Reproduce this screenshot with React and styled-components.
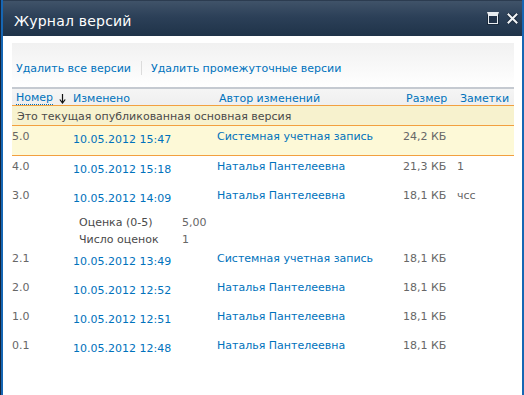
import React from "react";
import styled, { createGlobalStyle } from "styled-components";

const GlobalStyle = createGlobalStyle`
  html, body {
    margin: 0;
    padding: 0;
    background: #ffffff;
  }
  body {
    font-family: "DejaVu Sans", Verdana, sans-serif;
    font-size: 11px;
  }
`;

const versions = [
  { num: "5.0", date: "10.05.2012 15:47", author: "Системная учетная запись", size: "24,2 КБ", note: "", current: true },
  { num: "4.0", date: "10.05.2012 15:18", author: "Наталья Пантелеевна", size: "21,3 КБ", note: "1" },
  {
    num: "3.0", date: "10.05.2012 14:09", author: "Наталья Пантелеевна", size: "18,1 КБ", note: "чсс",
    props: [["Оценка (0-5)", "5,00"], ["Число оценок", "1"]],
  },
  { num: "2.1", date: "10.05.2012 13:49", author: "Системная учетная запись", size: "18,1 КБ", note: "" },
  { num: "2.0", date: "10.05.2012 12:52", author: "Наталья Пантелеевна", size: "18,1 КБ", note: "" },
  { num: "1.0", date: "10.05.2012 12:51", author: "Наталья Пантелеевна", size: "18,1 КБ", note: "" },
  { num: "0.1", date: "10.05.2012 12:48", author: "Наталья Пантелеевна", size: "18,1 КБ", note: "" },
];

const COLS = "61px 144px 186px 54px 1fr";

function App() {
  return (
    <>
      <GlobalStyle />
      <Frame>
        <Dialog>
          <TitleBar>
            <Title>Журнал версий</Title>
            <TitleButtons>
              <MaxButton />
              <CloseButton>
                <svg width="11" height="11" viewBox="0 0 11 11">
                  <path d="M1.5 1.5 L9.5 9.5 M9.5 1.5 L1.5 9.5" stroke="#1c2c3e" strokeWidth="4" strokeLinecap="square" />
                  <path d="M1.5 1.5 L9.5 9.5 M9.5 1.5 L1.5 9.5" stroke="#f2f4f6" strokeWidth="2" strokeLinecap="square" />
                </svg>
              </CloseButton>
            </TitleButtons>
          </TitleBar>
          <Body>
            <Toolbar>
              <ToolLink>Удалить все версии</ToolLink>
              <ToolSep />
              <ToolLink>Удалить промежуточные версии</ToolLink>
            </Toolbar>
            <HeaderRow>
              <HeadCell $pl={4}>
                <SortLabel>Номер</SortLabel>
                <SortArrow width="7" height="10" viewBox="0 0 7 10">
                  <path d="M3.5 0 V8.5 M0.8 5.5 L3.5 9 L6.2 5.5" stroke="#111" strokeWidth="1.2" fill="none" />
                </SortArrow>
              </HeadCell>
              <HeadCell $pl={0}>Изменено</HeadCell>
              <HeadCell $pl={2}>Автор изменений</HeadCell>
              <HeadCell $pl={3}>Размер</HeadCell>
              <HeadCell $pl={3}>Заметки</HeadCell>
            </HeaderRow>
            <CurrentNote>Это текущая опубликованная основная версия</CurrentNote>
            {versions.map((v) => (
              <Version key={v.num} $current={v.current}>
                <Row>
                  <Num>{v.num}</Num>
                  <DateLink>{v.date}</DateLink>
                  <Author>{v.author}</Author>
                  <Size>{v.size}</Size>
                  <Note>{v.note}</Note>
                </Row>
                {v.props && (
                  <Props>
                    {v.props.map(([k, val]) => (
                      <PropLine key={k}>
                        <PropName>{k}</PropName>
                        <PropValue>{val}</PropValue>
                      </PropLine>
                    ))}
                  </Props>
                )}
              </Version>
            ))}
          </Body>
        </Dialog>
      </Frame>
    </>
  );
}

const Frame = styled.div`
  width: 524px;
  height: 395px;
  overflow: hidden;
  background: #16243a;
  padding-left: 1px;
  box-sizing: border-box;
`;

const Dialog = styled.div`
  width: 523px;
  height: 395px;
  border-left: 2px solid #1666b3;
  border-right: 2px solid #1666b3;
  box-sizing: border-box;
  background: #fff;
  display: flex;
  flex-direction: column;
`;

const TitleBar = styled.div`
  height: 36px;
  flex: none;
  box-sizing: border-box;
  border-top: 1px solid #2c3c50;
  background: linear-gradient(#405369, #2c4058 45%, #1f3349);
  display: flex;
  align-items: center;
  justify-content: space-between;
  padding: 2px 4px 0 11px;
`;

const Title = styled.div`
  color: #fff;
  font-family: "DejaVu Sans", Verdana, sans-serif;
  font-size: 14px;
  letter-spacing: 0.2px;
  margin-top: 2px;
`;

const TitleButtons = styled.div`
  display: flex;
  align-items: center;
  gap: 8px;
  margin-bottom: 3px;
`;

const MaxButton = styled.div`
  width: 10px;
  height: 9px;
  border: 1px solid #1a2a3c;
  box-shadow: inset 0 0 0 1px #e8ecf0;
  border-top-width: 3px;
  border-top-color: #e8ecf0;
  background: #223349;
`;

const CloseButton = styled.div`
  width: 11px;
  height: 11px;
  display: flex;
`;

const Body = styled.div`
  flex: 1;
  padding: 7px 8px 0 9px;
`;

const Toolbar = styled.div`
  height: 46px;
  box-sizing: border-box;
  background: linear-gradient(#f1f1f1, #ffffff);
  border-bottom: 2px solid #c5cad1;
  display: flex;
  align-items: center;
  padding: 6px 0 0 4px;
`;

const ToolLink = styled.span`
  color: #0072bc;
  white-space: nowrap;
`;

const ToolSep = styled.span`
  width: 1px;
  height: 14px;
  background: #dcdcdc;
  margin: 0 9px 0 10px;
`;

const HeaderRow = styled.div`
  display: grid;
  grid-template-columns: ${COLS};
  height: 17px;
  box-sizing: border-box;
  padding-top: 3px;
  align-items: center;
  background: linear-gradient(#f5f5f5, #efefef);
  border-bottom: 1px solid #f2a03f;
`;

const HeadCell = styled.div`
  color: #0072bc;
  padding-left: ${(p) => p.$pl}px;
  display: flex;
  align-items: center;
  white-space: nowrap;
  line-height: 13px;
`;

const SortLabel = styled.span`
  border-bottom: 1px dotted #0072bc;
  line-height: 12px;
`;

const SortArrow = styled.svg`
  margin-left: 6px;
`;

const CurrentNote = styled.div`
  height: 16px;
  padding-top: 3px;
  line-height: 16px;
  padding-left: 5px;
  background: #f7f2ce;
  color: #4a4a4a;
  border-bottom: 1px solid #f2a03f;
`;

const Version = styled.div`
  background: ${(p) => (p.$current ? "#fdf9d7" : "transparent")};
  border-bottom: ${(p) => (p.$current ? "1px solid #f2a03f" : "none")};
  height: ${(p) => (p.$current ? "29px" : "auto")};
`;

const Row = styled.div`
  display: grid;
  grid-template-columns: ${COLS};
  height: 29px;
  line-height: 14px;
  white-space: nowrap;
`;

const Cell = styled.div`
  padding-top: 4px;
`;

const Num = styled(Cell)`
  color: #676767;
`;

const DateLink = styled(Cell)`
  color: #0072bc;
  padding-top: 7px;
`;

const Author = styled(Cell)`
  color: #0072bc;
`;

const Size = styled(Cell)`
  color: #676767;
`;

const Note = styled(Cell)`
  color: #676767;
`;

const Props = styled.div`
  padding: 0 0 0 67px;
`;

const PropLine = styled.div`
  display: grid;
  grid-template-columns: 103px auto;
  height: 17px;
  line-height: 17px;
`;

const PropName = styled.span`
  color: #4a4a4a;
`;

const PropValue = styled.span`
  color: #676767;
`;

export default App;
